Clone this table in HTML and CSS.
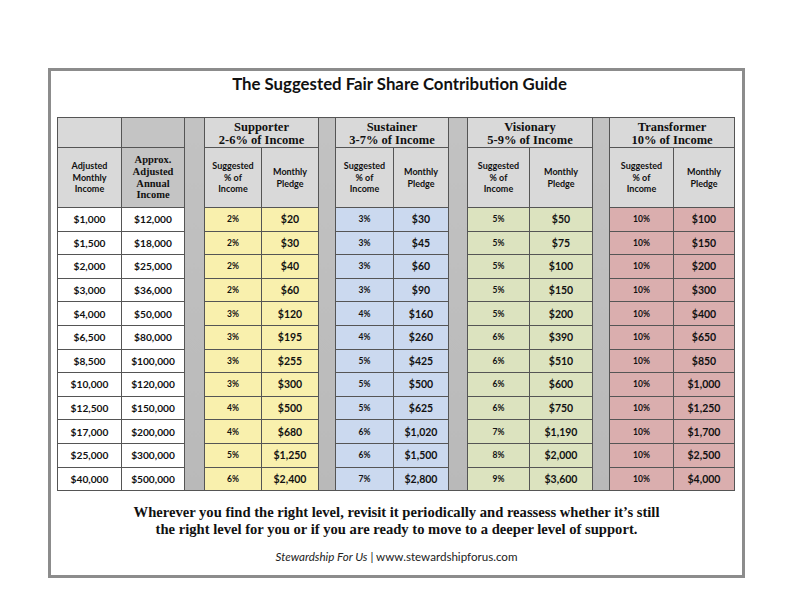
FILE: index.html
```html
<!DOCTYPE html>
<html>
<head>
<meta charset="utf-8">
<link rel="stylesheet" href="styles.css">
</head>
<body>
<div class="frame">
  <h1 class="title">The Suggested Fair Share Contribution Guide</h1>
  <table class="guide">
    <colgroup>
      <col style="width:64px"><col style="width:63px"><col style="width:20px">
      <col style="width:57px"><col style="width:57px"><col style="width:17px">
      <col style="width:58px"><col style="width:55px"><col style="width:19px">
      <col style="width:62px"><col style="width:63px"><col style="width:17px">
      <col style="width:64px"><col style="width:61px">
    </colgroup>
    <tr class="h1row">
      <td class="hd"></td>
      <td class="hd dark"></td>
      <td class="gap" rowspan="14"></td>
      <td class="tier" colspan="2">Supporter<br>2-6% of Income</td>
      <td class="gap" rowspan="14"></td>
      <td class="tier" colspan="2">Sustainer<br>3-7% of Income</td>
      <td class="gap" rowspan="14"></td>
      <td class="tier" colspan="2">Visionary<br>5-9% of Income</td>
      <td class="gap" rowspan="14"></td>
      <td class="tier" colspan="2">Transformer<br>10% of Income</td>
    </tr>
    <tr class="h2row">
      <td class="hd sub">Adjusted<br>Monthly<br>Income</td>
      <td class="hd dark serif">Approx.<br>Adjusted<br>Annual<br>Income</td>
      <td class="hd sub">Suggested<br>% of<br>Income</td>
      <td class="hd sub">Monthly<br>Pledge</td>
      <td class="hd sub">Suggested<br>% of<br>Income</td>
      <td class="hd sub">Monthly<br>Pledge</td>
      <td class="hd sub">Suggested<br>% of<br>Income</td>
      <td class="hd sub">Monthly<br>Pledge</td>
      <td class="hd sub">Suggested<br>% of<br>Income</td>
      <td class="hd sub">Monthly<br>Pledge</td>
    </tr>
    <tr><td class="inc">$1,000</td><td class="inc">$12,000</td><td class="y p">2%</td><td class="y m">$20</td><td class="b p">3%</td><td class="b m">$30</td><td class="g p">5%</td><td class="g m">$50</td><td class="r p">10%</td><td class="r m">$100</td></tr>
    <tr><td class="inc">$1,500</td><td class="inc">$18,000</td><td class="y p">2%</td><td class="y m">$30</td><td class="b p">3%</td><td class="b m">$45</td><td class="g p">5%</td><td class="g m">$75</td><td class="r p">10%</td><td class="r m">$150</td></tr>
    <tr><td class="inc">$2,000</td><td class="inc">$25,000</td><td class="y p">2%</td><td class="y m">$40</td><td class="b p">3%</td><td class="b m">$60</td><td class="g p">5%</td><td class="g m">$100</td><td class="r p">10%</td><td class="r m">$200</td></tr>
    <tr><td class="inc">$3,000</td><td class="inc">$36,000</td><td class="y p">2%</td><td class="y m">$60</td><td class="b p">3%</td><td class="b m">$90</td><td class="g p">5%</td><td class="g m">$150</td><td class="r p">10%</td><td class="r m">$300</td></tr>
    <tr><td class="inc">$4,000</td><td class="inc">$50,000</td><td class="y p">3%</td><td class="y m">$120</td><td class="b p">4%</td><td class="b m">$160</td><td class="g p">5%</td><td class="g m">$200</td><td class="r p">10%</td><td class="r m">$400</td></tr>
    <tr><td class="inc">$6,500</td><td class="inc">$80,000</td><td class="y p">3%</td><td class="y m">$195</td><td class="b p">4%</td><td class="b m">$260</td><td class="g p">6%</td><td class="g m">$390</td><td class="r p">10%</td><td class="r m">$650</td></tr>
    <tr><td class="inc">$8,500</td><td class="inc">$100,000</td><td class="y p">3%</td><td class="y m">$255</td><td class="b p">5%</td><td class="b m">$425</td><td class="g p">6%</td><td class="g m">$510</td><td class="r p">10%</td><td class="r m">$850</td></tr>
    <tr><td class="inc">$10,000</td><td class="inc">$120,000</td><td class="y p">3%</td><td class="y m">$300</td><td class="b p">5%</td><td class="b m">$500</td><td class="g p">6%</td><td class="g m">$600</td><td class="r p">10%</td><td class="r m">$1,000</td></tr>
    <tr><td class="inc">$12,500</td><td class="inc">$150,000</td><td class="y p">4%</td><td class="y m">$500</td><td class="b p">5%</td><td class="b m">$625</td><td class="g p">6%</td><td class="g m">$750</td><td class="r p">10%</td><td class="r m">$1,250</td></tr>
    <tr><td class="inc">$17,000</td><td class="inc">$200,000</td><td class="y p">4%</td><td class="y m">$680</td><td class="b p">6%</td><td class="b m">$1,020</td><td class="g p">7%</td><td class="g m">$1,190</td><td class="r p">10%</td><td class="r m">$1,700</td></tr>
    <tr><td class="inc">$25,000</td><td class="inc">$300,000</td><td class="y p">5%</td><td class="y m">$1,250</td><td class="b p">6%</td><td class="b m">$1,500</td><td class="g p">8%</td><td class="g m">$2,000</td><td class="r p">10%</td><td class="r m">$2,500</td></tr>
    <tr><td class="inc">$40,000</td><td class="inc">$500,000</td><td class="y p">6%</td><td class="y m">$2,400</td><td class="b p">7%</td><td class="b m">$2,800</td><td class="g p">9%</td><td class="g m">$3,600</td><td class="r p">10%</td><td class="r m">$4,000</td></tr>
  </table>
  <p class="note">Wherever you find the right level, revisit it periodically and reassess whether it’s still<br>the right level for you or if you are ready to move to a deeper level of support.</p>
  <p class="footer"><em>Stewardship For Us</em> | www.stewardshipforus.com</p>
</div>
</body>
</html>
```

FILE: styles.css
```css
html, body {
  margin: 0;
  padding: 0;
  background: #ffffff;
}
body {
  font-family: "Lato", "Liberation Sans", sans-serif;
  color: #111;
}
.frame {
  box-sizing: border-box;
  margin: 68px 0 0 48px;
  width: 697px;
  height: 510px;
  border: 3px solid #8c8c8c;
  padding: 0 0 0 6px;
}
.title {
  margin: 0;
  padding: 2px 0 0 0;
  height: 46px;
  box-sizing: border-box;
  font-size: 16.8px;
  line-height: 22px;
  font-weight: 700;
  text-align: center;
  color: #111;
}
.guide {
  table-layout: fixed;
  border-collapse: collapse;
  width: 677px;
}
.guide td {
  border: 1px solid #555;
  padding: 0;
  text-align: center;
  vertical-align: middle;
  font-weight: 700;
}
.guide .h1row td { height: 29px; }
.guide .h2row td { height: 59px; }
.hd { background: #d9d9d9; }
.hd.dark { background: #c4c4c4; }
.gap {
  background: linear-gradient(to bottom, #c2c2c2, #b9b9b9);
}
.guide td.tier {
  background: #d9d9d9;
  font-family: "Liberation Serif", "Times New Roman", serif;
  font-size: 12.5px;
  line-height: 13px;
  vertical-align: top;
  padding-top: 3px;
  box-sizing: border-box;
}
.sub {
  font-size: 9px;
  line-height: 11.7px;
}
.guide td.serif {
  font-family: "Liberation Serif", serif;
  font-size: 10.5px;
  line-height: 11.7px;
}
.guide tr td.inc,
.guide tr td.p,
.guide tr td.m { height: 22.6px; }
.inc { background: #fff; font-size: 10.2px; }
.p { font-size: 8.5px; }
.m { font-size: 10.5px; }
.y { background: #f9f0ad; }
.b { background: #cbd9ef; }
.g { background: #dce3bf; }
.r { background: #daaeae; }
.note {
  margin: 12.5px 0 0 0;
  padding-right: 6px;
  text-align: center;
  font-family: "Liberation Serif", serif;
  font-weight: 700;
  font-size: 14.6px;
  line-height: 17.5px;
}
.footer {
  margin: 11px 0 0 0;
  padding-right: 6px;
  text-align: center;
  font-size: 11.6px;
  line-height: 14px;
  color: #222;
}
.footer em { font-style: italic; }
```
